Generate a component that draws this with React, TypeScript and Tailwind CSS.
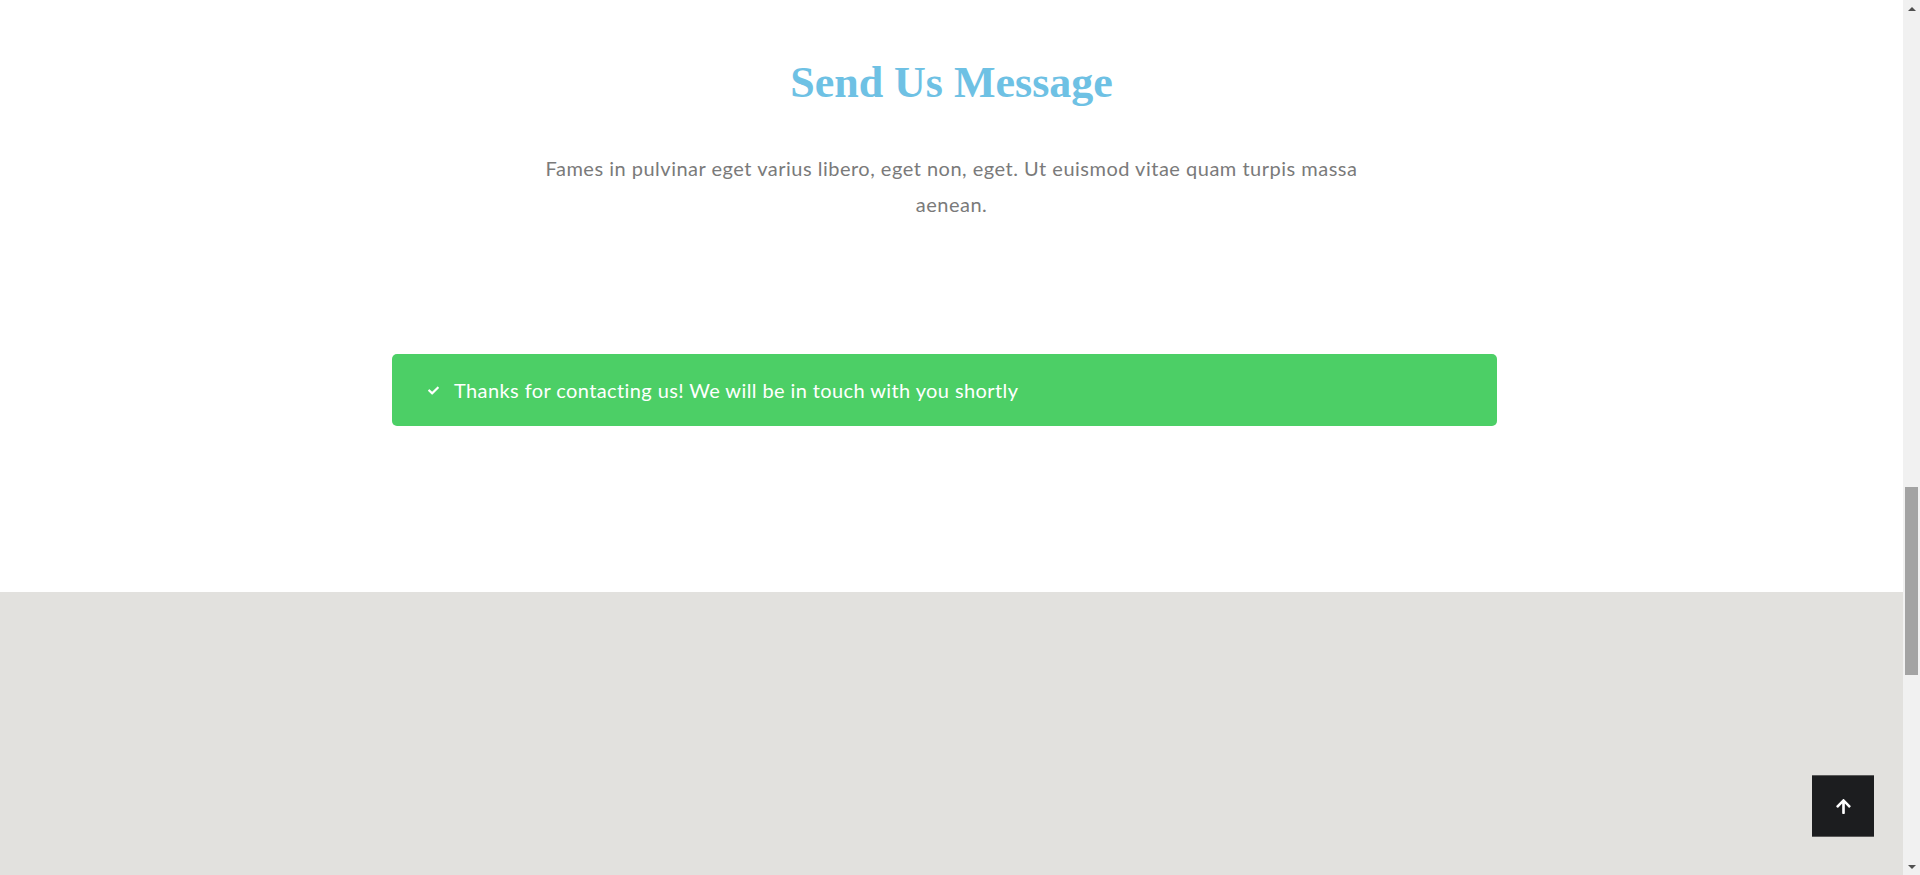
import React from "react";

function CheckIcon() {
  return (
    <svg width="11" height="9" viewBox="0 0 512 400" className="shrink-0">
      <path
        d="M173.9 390.3L7.5 223.9c-10-10-10-26.2 0-36.2l36.2-36.2c10-10 26.2-10 36.2 0L192 263.6 432.1 23.5c10-10 26.2-10 36.2 0l36.2 36.2c10 10 10 26.2 0 36.2L210.1 390.3c-10 10-26.2 10-36.2 0z"
        fill="#fff"
      />
    </svg>
  );
}

function ArrowUp() {
  return (
    <svg width="15" height="17" viewBox="0 0 448 512">
      <path
        d="M34.9 289.5l-22.2-22.2c-9.4-9.4-9.4-24.6 0-33.9L207 39c9.4-9.4 24.6-9.4 33.9 0l194.3 194.3c9.4 9.4 9.4 24.6 0 33.9L413 289.4c-9.5 9.5-25 9.3-34.3-.4L264 168.6V456c0 13.3-10.7 24-24 24h-32c-13.3 0-24-10.7-24-24V168.6L69.2 289.1c-9.3 9.8-24.8 10-34.3.4z"
        fill="#fff"
      />
    </svg>
  );
}

function Scrollbar() {
  return (
    <div className="w-[17px] h-full bg-[#f1f1f1] flex flex-col items-center shrink-0">
      <div className="h-[17px] flex items-center justify-center">
        <div className="w-0 h-0 border-l-[4px] border-r-[4px] border-b-[4px] border-l-transparent border-r-transparent border-b-[#505050]" />
      </div>
      <div className="h-[470px]" />
      <div className="w-[13px] h-[188px] bg-[#a3a3a3]" />
      <div className="flex-1" />
      <div className="h-[17px] flex items-center justify-center">
        <div className="w-0 h-0 border-l-[4px] border-r-[4px] border-t-[4px] border-l-transparent border-r-transparent border-t-[#505050]" />
      </div>
    </div>
  );
}

export default function App() {
  return (
    <div className="flex w-[1920px] h-[875px] overflow-hidden bg-white">
      <div className="relative w-[1903px] h-full flex flex-col">
        {/* Contact section */}
        <section className="h-[592px] flex flex-col items-center pt-[56px] shrink-0">
          <h2 className="font-['Liberation_Serif',serif] font-bold text-[44px] leading-[53px] text-[#6ec1e4]">
            Send Us Message
          </h2>
          <p className="mt-[41px] w-[840px] text-center font-['Lato',sans-serif] text-[20px] tracking-[0.5px] leading-[36px] text-[#7a7a7a]">
            Fames in pulvinar eget varius libero, eget non, eget. Ut euismod vitae quam turpis massa aenean.
          </p>
          <div className="mt-[132px] w-[1105px] h-[72px] ml-[-14px] rounded-[5px] bg-[#4ccf66] flex items-center pl-[36px] gap-[15px]">
            <CheckIcon />
            <span className="font-['Lato',sans-serif] text-[20px] tracking-[0.4px] text-white">
              Thanks for contacting us! We will be in touch with you shortly
            </span>
          </div>
        </section>

        {/* Footer area */}
        <section className="flex-1 bg-[#e2e1de]" />

        <button className="absolute right-[29px] bottom-[38px] w-[62px] h-[62px] bg-[#1c1d1f] border-t border-b border-[#5a5a5a] flex items-center justify-center">
          <ArrowUp />
        </button>
      </div>
      <Scrollbar />
    </div>
  );
}
